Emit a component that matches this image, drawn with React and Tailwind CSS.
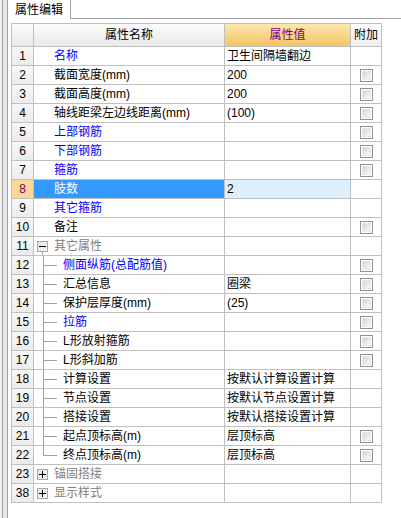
import React from "react";

const FONT = { fontFamily: '"Liberation Sans", "Noto Sans CJK SC", sans-serif' };

const rows = [
  { n: "1", name: "名称", c: "blue", val: "卫生间隔墙翻边", cb: false },
  { n: "2", name: "截面宽度(mm)", val: "200", cb: true },
  { n: "3", name: "截面高度(mm)", val: "200", cb: true },
  { n: "4", name: "轴线距梁左边线距离(mm)", val: "(100)", cb: true },
  { n: "5", name: "上部钢筋", c: "blue", val: "", cb: true },
  { n: "6", name: "下部钢筋", c: "blue", val: "", cb: true },
  { n: "7", name: "箍筋", c: "blue", val: "", cb: true },
  { n: "8", name: "肢数", sel: true, val: "2", cb: false },
  { n: "9", name: "其它箍筋", c: "blue", val: "", cb: false },
  { n: "10", name: "备注", val: "", cb: true },
  { n: "11", name: "其它属性", group: "-", val: "", cb: false },
  { n: "12", name: "侧面纵筋(总配筋值)", c: "blue", child: true, val: "", cb: true },
  { n: "13", name: "汇总信息", child: true, val: "圈梁", cb: true },
  { n: "14", name: "保护层厚度(mm)", child: true, val: "(25)", cb: true },
  { n: "15", name: "拉筋", c: "blue", child: true, val: "", cb: true },
  { n: "16", name: "L形放射箍筋", child: true, val: "", cb: true },
  { n: "17", name: "L形斜加筋", child: true, val: "", cb: true },
  { n: "18", name: "计算设置", child: true, val: "按默认计算设置计算", cb: false },
  { n: "19", name: "节点设置", child: true, val: "按默认节点设置计算", cb: false },
  { n: "20", name: "搭接设置", child: true, val: "按默认搭接设置计算", cb: false },
  { n: "21", name: "起点顶标高(m)", child: true, val: "层顶标高", cb: true },
  { n: "22", name: "终点顶标高(m)", child: true, last: true, val: "层顶标高", cb: true },
  { n: "23", name: "锚固搭接", group: "+", val: "", cb: false },
  { n: "38", name: "显示样式", group: "+", val: "", cb: false },
];

function Checkbox() {
  return (
    <span className="w-[13px] h-[13px] border border-[#929292] bg-white p-px flex">
      <span className="flex-1 bg-gradient-to-br from-[#d4d4d4] to-[#fbfbfb] border border-[#e6e6e6]" />
    </span>
  );
}

function Expander({ sign }) {
  return (
    <span className="w-[11px] h-[11px] border border-[#a8a8a8] bg-gradient-to-br from-[#e6e6e6] to-[#f8f8f8] flex items-center justify-center">
      <svg width="9" height="9" viewBox="0 0 9 9">
        <line x1="1" y1="4.5" x2="8" y2="4.5" stroke="#000" strokeWidth="1" />
        {sign === "+" && <line x1="4.5" y1="1" x2="4.5" y2="8" stroke="#000" strokeWidth="1" />}
      </svg>
    </span>
  );
}

function TreeLine({ last }) {
  return (
    <svg width="29" height="18" viewBox="0 0 29 18" className="shrink-0">
      <line x1="9.5" y1="0" x2="9.5" y2={last ? 9.5 : 18} stroke="#a0a0a0" strokeWidth="1" />
      <line x1="9.5" y1="9.5" x2="23" y2="9.5" stroke="#a0a0a0" strokeWidth="1" />
    </svg>
  );
}

function Row({ r }) {
  const nameColor = r.sel
    ? "text-white"
    : r.group
    ? "text-[#808080]"
    : r.c === "blue"
    ? "text-[#0000ff]"
    : "text-black";
  return (
    <div className="flex h-[19px]">
      <div
        className={`w-[22px] border-r border-b border-[#c0c0c0] flex items-center justify-center text-[12px] ${
          r.sel
            ? "bg-[#fcd898] text-[#800060]"
            : "bg-gradient-to-b from-[#f8f8f8] to-[#ebebeb] text-black"
        }`}
      >
        {r.n}
      </div>
      <div
        className={`w-[191px] border-r border-b border-[#c0c0c0] flex items-center text-[12px] whitespace-nowrap ${
          r.sel ? "bg-[#3399ff]" : "bg-white"
        } ${nameColor}`}
      >
        {r.group ? (
          <>
            <span className="w-[3px] shrink-0" />
            <span className="relative flex flex-col items-start h-full justify-center">
              <Expander sign={r.group} />
              {r.group === "-" && (
                <span className="absolute left-[5px] top-[15px] bottom-0 w-px bg-[#a0a0a0]" />
              )}
            </span>
            <span className="ml-[6px]">{r.name}</span>
          </>
        ) : r.child ? (
          <>
            <TreeLine last={r.last} />
            <span>{r.name}</span>
          </>
        ) : (
          <span className="pl-[20px]">{r.name}</span>
        )}
      </div>
      <div
        className={`w-[126px] border-r border-b border-[#c0c0c0] flex items-center pl-[2px] text-[12px] text-black whitespace-nowrap ${
          r.sel ? "bg-[#ddeefd]" : "bg-white"
        }`}
      >
        {r.val}
      </div>
      <div className="w-[31px] border-r border-b border-[#c0c0c0] flex items-center justify-center bg-white">
        {r.cb && <Checkbox />}
      </div>
    </div>
  );
}

export default function App() {
  return (
    <div className="w-[401px] h-[518px] flex bg-white overflow-hidden" style={FONT}>
      <div className="w-[8px] h-full flex shrink-0">
        <div className="w-[2px] bg-[#f0f0f0]" />
        <div className="w-px bg-[#a0a0a0]" />
        <div className="w-[4px] bg-[#e6e6e6]" />
        <div className="w-px bg-[#a0a0a0]" />
      </div>
      <div className="flex-1 flex flex-col">
        <div className="h-[19px] flex shrink-0">
          <div className="w-[63px] h-full border-r border-[#a0a0a0] bg-white flex items-center pl-[7px] text-[12px] text-black">
            属性编辑
          </div>
          <div className="flex-1 h-full border-b border-[#a0a0a0] bg-white" />
        </div>
        <div className="pl-[3px] pt-[4px]">
          <div className="w-[371px] border-l border-t border-[#c0c0c0]">
            <div className="flex h-[23px]">
              <div className="w-[22px] border-r border-b border-[#c0c0c0] bg-gradient-to-b from-[#fbfbfb] to-[#eaeaea]" />
              <div className="w-[191px] border-r border-b border-[#c0c0c0] bg-gradient-to-b from-[#fbfbfb] to-[#eaeaea] flex items-center justify-center text-[12px] text-black">
                属性名称
              </div>
              <div className="w-[126px] border-r border-b border-[#c0c0c0] bg-gradient-to-b from-[#fde7ad] to-[#f4c463] flex items-center justify-center text-[12px] text-[#800080]">
                属性值
              </div>
              <div className="w-[31px] border-r border-b border-[#c0c0c0] bg-gradient-to-b from-[#ffffff] to-[#eeeeee] flex items-center justify-center text-[12px] text-black">
                附加
              </div>
            </div>
            {rows.map((r) => (
              <Row key={r.n} r={r} />
            ))}
          </div>
        </div>
      </div>
    </div>
  );
}
